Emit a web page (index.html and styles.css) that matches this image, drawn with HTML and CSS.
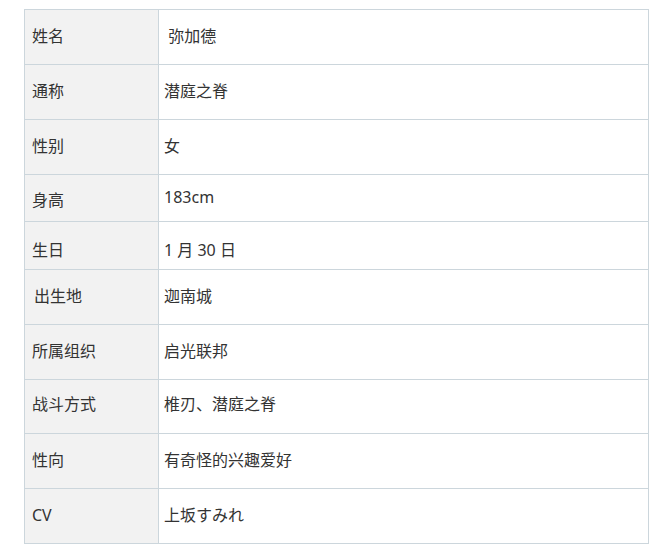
FILE: index.html
```html
<!DOCTYPE html>
<html lang="zh-CN">
<head>
<meta charset="utf-8">
<title>弥加德</title>
<link rel="stylesheet" href="styles.css">
</head>
<body>
<div class="page">
  <div class="info-table">
    <div class="cell label">姓名</div>
    <div class="cell value">&nbsp;弥加德</div>

    <div class="cell label">通称</div>
    <div class="cell value">潜庭之脊</div>

    <div class="cell label">性别</div>
    <div class="cell value">女</div>

    <div class="cell label row-short low">身高</div>
    <div class="cell value row-short">183cm</div>

    <div class="cell label row-mid lower">生日</div>
    <div class="cell value row-mid lower">1 月 30 日</div>

    <div class="cell label indent">出生地</div>
    <div class="cell value">迦南城</div>

    <div class="cell label">所属组织</div>
    <div class="cell value">启光联邦</div>

    <div class="cell label row-54 high">战斗方式</div>
    <div class="cell value row-54 high">椎刃、潜庭之脊</div>

    <div class="cell label">性向</div>
    <div class="cell value">有奇怪的兴趣爱好</div>

    <div class="cell label">CV</div>
    <div class="cell value">上坂すみれ</div>
  </div>
</div>
</body>
</html>
```
FILE: styles.css
```css
* {
  box-sizing: border-box;
}

html, body {
  margin: 0;
  padding: 0;
  background: #ffffff;
}

body {
  font-family: "Noto Sans", "Noto Sans CJK SC", sans-serif;
  font-size: 16px;
  color: #333333;
}

.page {
  padding: 9px 0 0 24px;
}

.info-table {
  display: grid;
  grid-template-columns: 134px 490px;
  width: 625px;
  border-top: 1px solid #ccd6dc;
  border-left: 1px solid #ccd6dc;
}

.cell {
  height: 55px;
  display: flex;
  align-items: center;
  border-right: 1px solid #ccd6dc;
  border-bottom: 1px solid #ccd6dc;
  padding-bottom: 3px;
  line-height: 20px;
  white-space: pre;
}

.label {
  background: #f2f2f2;
  padding-left: 7px;
}

.value {
  background: #ffffff;
  padding-left: 5px;
}

.indent {
  padding-left: 9px;
}

.row-short {
  height: 47px;
}

.row-mid {
  height: 48px;
}

.row-54 {
  height: 54px;
}

.low {
  padding-bottom: 0;
  padding-top: 4px;
}

.lower {
  padding-bottom: 0;
  padding-top: 8px;
}

.high {
  padding-bottom: 6px;
}
```
